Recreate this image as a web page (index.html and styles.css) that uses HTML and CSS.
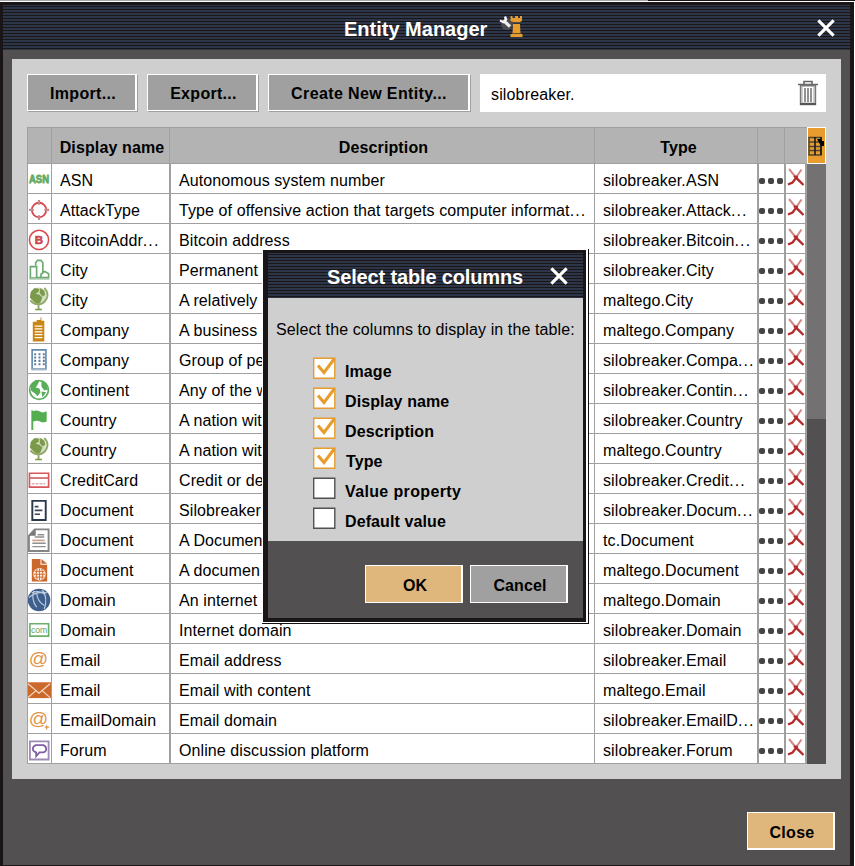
FILE: index.html
```html
<!DOCTYPE html>
<html lang="en">
<head>
<meta charset="utf-8">
<title>Entity Manager</title>
<link rel="stylesheet" href="styles.css">
</head>
<body>
<svg class="defs" aria-hidden="true">
  <symbol id="i-attack" viewBox="0 0 24 28"><g fill="none" stroke="#d9494d"><circle cx="11.500" cy="15.500" r="7.500" stroke-width="1.900"/><path stroke="#c9868a" stroke-width="2.400" d="M11.500 5v5M11.500 21v5M1 15.500h5M17 15.500h5"/></g></symbol>
  <symbol id="i-city" viewBox="0 0 24 28"><g fill="none" stroke="#6aaa70" stroke-width="1.700"><path d="M8 11V8l2-2.500h3.500l2 2.500V18M2.500 12h6.500v12H2.500zM9 23.500h12.500v-4L17.500 17l-4 3v3.500"/><path stroke="#a5c9a9" d="M1.500 24.800h21"/></g></symbol>
  <symbol id="i-globe" viewBox="0 0 24 28"><circle cx="10.500" cy="11" r="8.500" fill="#d4dec5"/><path fill="#7b9a4a" d="M3 7l4-4 5 1-1 3-3 2 4 1 3 3-2 5-3 2-4-3-4-4zM13 3l4 3 1 4-3 2-3-4z"/><path fill="none" stroke="#91aa6a" stroke-width="2" d="M17 3q5 5 2.500 11-3 6-9 6-5 0-8-4M11 20v5"/><path stroke="#7b9a4a" stroke-width="1.600" d="M7.500 25.500h7"/></symbol>
  <symbol id="i-tower" viewBox="0 0 24 28"><path fill="#cb8515" d="M5 7h4V5h4V2.500h1V6h3v21.500H5z"/><path stroke="#fff" stroke-width="1.300" d="M7 11.500h8M7 14.500h8M7 17.500h8M7 20.500h8M7 23.500h8"/></symbol>
  <symbol id="i-office" viewBox="0 0 24 28"><path fill="#fff" stroke="#6389ad" stroke-width="1.700" d="M4.300 5h14.400v20H4.300z"/><path fill="none" stroke="#587c9f" stroke-width="2.200" stroke-dasharray="2 2.500" d="M6.500 9.500h11M6.500 13h11M6.500 16.500h11M6.500 20h11"/><path stroke="#a9b9c8" stroke-width="2" d="M3.500 25.500h16"/></symbol>
  <symbol id="i-world" viewBox="0 0 24 28"><circle cx="11.500" cy="15.500" r="9.800" fill="#fff" stroke="#58ad58" stroke-width="1.700"/><path fill="#58ad58" d="M3 10l5-5 4 1-2 4-2 3 4 1 1 4-3 4-3-3-4-3zM14 6l5 3 2 6-4 1-3-4zM14 17l5 1-4 5z"/></symbol>
  <symbol id="i-flag" viewBox="0 0 24 28"><path fill="#54ae50" d="M3.500 5.500H5v1q4-2 8 .5 3 1.500 6.500-.5v10.500q-4 2-7 0-3-1.500-7 0v9h-2z"/></symbol>
  <symbol id="i-card" viewBox="0 0 24 28"><path fill="#fff" stroke="#d7575b" stroke-width="1.700" d="M1.500 8.500h20v14.500h-20z"/><path stroke="#cf686b" stroke-width="1.800" d="M1.500 13.500h20"/><path stroke="#d9b3b5" stroke-width="1.600" stroke-dasharray="3 1" d="M4 19.500h14"/></symbol>
  <symbol id="i-doc1" viewBox="0 0 24 28"><path fill="#fff" stroke="#2c3948" stroke-width="2" d="M4.500 6h14v20h-14z"/><path stroke="#3d4855" stroke-width="1.800" d="M7 12h4M7 16h8M7 20h5.500"/></symbol>
  <symbol id="i-doc2" viewBox="0 0 24 28"><path fill="#fff" stroke="#858585" stroke-width="2" d="M7 4.500h14.500V27H1V11z"/><path fill="#777" d="M1 11h7V4z"/><path stroke="#8f8f8f" stroke-width="1.500" d="M10 10h7M4.500 19h14M4.500 22.500h14M7 12.500h10"/><path stroke="#cba58d" stroke-width="1.800" d="M4.500 16h13"/></symbol>
  <symbol id="i-doc3" viewBox="0 0 24 28"><path fill="#cb682b" d="M4 4h9v6h7v17.500H4zM14 4l6 5h-6z"/><circle cx="12" cy="20" r="6.500" fill="#fbe6da"/><path fill="none" stroke="#cb682b" stroke-width=".9" d="M6 20h12M7 17h10M7 23h10M12 14v12M9.500 14.500q-2 5 0 11M14.500 14.500q2 5 0 11"/></symbol>
  <symbol id="i-domain" viewBox="0 0 24 28"><circle cx="11.500" cy="15.500" r="11.800" fill="#3f608d"/><path fill="none" stroke="#c0cddd" stroke-width="1.200" d="M1 13q8-7 19-5M6 6q-3 9 3 17M9 8q1 10 8 13M15 5q6 8 2 20M4 8q8-3 14 2"/></symbol>
  <symbol id="i-mail" viewBox="0 0 24 28"><path fill="#cb682b" d="M0 7.500h24v16.500H0z"/><path fill="none" stroke="#f6d9c8" stroke-width="1.300" d="M0 9l11.500 10L23 9M0 23.500l8-7M23 23.500l-8-7"/></symbol>
  <symbol id="i-forum" viewBox="0 0 24 28"><path fill="#fff" stroke="#9d8bb5" stroke-width="1.900" d="M2 6.500h19.500v19H2z"/><path fill="none" stroke="#8060a4" stroke-width="1.800" d="M8 10.500h8q3 1 3 4t-3 3.500h-4L8.500 22v-4q-3.500-1-3.500-3.500t3-4z"/></symbol>
  <symbol id="i-x" viewBox="0 0 18 20"><path fill="none" stroke="#d28888" stroke-width="2" d="M2 1.500L9 10M14.500 2L9 10"/><path fill="none" stroke="#b32a2c" stroke-width="2.200" d="M7 8.500Q9 10 16.500 17.500M10.500 8.500L5.500 15l-4.500 2"/></symbol>
  <symbol id="i-close" viewBox="0 0 20 20"><path fill="none" stroke="#fff" stroke-width="3.400" d="M1.500 1.500l17 17M18.500 1.500l-17 17"/></symbol>
  <symbol id="i-check" viewBox="0 0 23 22"><path fill="#fff" stroke="#e79c2d" stroke-width="1.400" d="M.700 1.200h21.100v20H.7z"/><path fill="none" stroke="#e79c2d" stroke-width="3" d="M5 8.500l6 7L21.500 1.500"/></symbol>
  <symbol id="i-box" viewBox="0 0 23 22"><path fill="#fff" stroke="#525051" stroke-width="1.400" d="M.700 1.200h21.100v20H.7z"/></symbol>
</svg>

<div class="edge"></div>
<main class="window">
  <header class="titlebar">
    <h1 class="title">Entity Manager</h1>
    <svg class="logo" viewBox="0 0 24 24">
      <circle cx="8" cy="9" r="6" fill="#555" opacity=".8"/>
      <path stroke="#eee" stroke-width="3.200" d="M4.500 5.500l6.500 6"/><path fill="none" stroke="#f4f4f4" stroke-width="2.400" d="M1 5.500l3.500 1.500L7 4.500 6 1.500"/>
      <path fill="#e79c2d" d="M11.500 1h2v2h2.500V1h3v2h2V1h2v5l-2 1v1h-7V7l-2.500-1zM14 9h7l.5 10h2v3H11.500v-3h2z"/>
      <path stroke="#604a34" d="M13.500 7.500h8M14 18.500h7"/>
    </svg>
    <svg class="close-x"><use href="#i-close"/></svg>
  </header>
  <section class="panel">
    <div class="toolbar">
      <button class="btn import">Import...</button>
      <button class="btn export">Export...</button>
      <button class="btn create">Create New Entity...</button>
      <div class="search"><span>silobreaker.</span>
        <svg class="trash" viewBox="0 0 20 26"><path fill="none" stroke="#666" stroke-width="1.600" d="M6 4V1.500h8V4M0 4.500h20"/><path fill="#d0d0d0" stroke="#777" stroke-width="1.400" d="M2.500 5.500h15v19h-15z"/><path fill="#fff" d="M5 7h10v15H5z"/><path stroke="#777" stroke-width="1.600" d="M7 8v14M10 8v14M13 8v14"/><path stroke="#555" stroke-width="2" d="M2 24h16"/></svg>
      </div>
    </div>
    <div class="table-wrap">
      <div class="table">
        <div class="row head"><div></div><div>Display name</div><div>Description</div><div>Type</div><div></div><div></div></div>
        <div class="row"><svg viewBox="0 0 24 28"><text class="asn" x="1" y="19" textLength="21" lengthAdjust="spacingAndGlyphs">ASN</text></svg><div>ASN</div><div>Autonomous system number</div><div>silobreaker.ASN</div><div class="dots"><i></i><i></i><i></i></div><svg><use href="#i-x"/></svg></div>
        <div class="row"><svg><use href="#i-attack"/></svg><div>AttackType</div><div>Type of offensive action that targets computer informat<b>...</b></div><div>silobreaker.Attack<b>...</b></div><div class="dots"><i></i><i></i><i></i></div><svg><use href="#i-x"/></svg></div>
        <div class="row"><svg viewBox="0 0 24 28"><circle cx="11.500" cy="15.500" r="10" fill="none" stroke="#d9494d" stroke-width="1.600"/><text class="coin" x="11.500" y="19.500" text-anchor="middle">B</text></svg><div>BitcoinAddr<b>...</b></div><div>Bitcoin address</div><div>silobreaker.Bitcoin<b>...</b></div><div class="dots"><i></i><i></i><i></i></div><svg><use href="#i-x"/></svg></div>
        <div class="row"><svg><use href="#i-city"/></svg><div>City</div><div>Permanent</div><div>silobreaker.City</div><div class="dots"><i></i><i></i><i></i></div><svg><use href="#i-x"/></svg></div>
        <div class="row"><svg><use href="#i-globe"/></svg><div>City</div><div>A relatively</div><div>maltego.City</div><div class="dots"><i></i><i></i><i></i></div><svg><use href="#i-x"/></svg></div>
        <div class="row"><svg><use href="#i-tower"/></svg><div>Company</div><div>A business</div><div>maltego.Company</div><div class="dots"><i></i><i></i><i></i></div><svg><use href="#i-x"/></svg></div>
        <div class="row"><svg><use href="#i-office"/></svg><div>Company</div><div>Group of pe</div><div>silobreaker.Compa<b>...</b></div><div class="dots"><i></i><i></i><i></i></div><svg><use href="#i-x"/></svg></div>
        <div class="row"><svg><use href="#i-world"/></svg><div>Continent</div><div>Any of the w</div><div>silobreaker.Contin<b>...</b></div><div class="dots"><i></i><i></i><i></i></div><svg><use href="#i-x"/></svg></div>
        <div class="row"><svg><use href="#i-flag"/></svg><div>Country</div><div>A nation wit</div><div>silobreaker.Country</div><div class="dots"><i></i><i></i><i></i></div><svg><use href="#i-x"/></svg></div>
        <div class="row"><svg><use href="#i-globe"/></svg><div>Country</div><div>A nation wit</div><div>maltego.Country</div><div class="dots"><i></i><i></i><i></i></div><svg><use href="#i-x"/></svg></div>
        <div class="row"><svg><use href="#i-card"/></svg><div>CreditCard</div><div>Credit or de</div><div>silobreaker.Credit<b>...</b></div><div class="dots"><i></i><i></i><i></i></div><svg><use href="#i-x"/></svg></div>
        <div class="row"><svg><use href="#i-doc1"/></svg><div>Document</div><div>Silobreaker</div><div>silobreaker.Docum<b>...</b></div><div class="dots"><i></i><i></i><i></i></div><svg><use href="#i-x"/></svg></div>
        <div class="row"><svg><use href="#i-doc2"/></svg><div>Document</div><div>A Documen</div><div>tc.Document</div><div class="dots"><i></i><i></i><i></i></div><svg><use href="#i-x"/></svg></div>
        <div class="row"><svg><use href="#i-doc3"/></svg><div>Document</div><div>A documen</div><div>maltego.Document</div><div class="dots"><i></i><i></i><i></i></div><svg><use href="#i-x"/></svg></div>
        <div class="row"><svg><use href="#i-domain"/></svg><div>Domain</div><div>An internet</div><div>maltego.Domain</div><div class="dots"><i></i><i></i><i></i></div><svg><use href="#i-x"/></svg></div>
        <div class="row"><svg viewBox="0 0 24 28"><path fill="#fff" stroke="#6ab06a" stroke-width="1.700" d="M2 9h19.500v13H2z"/><text class="com" x="3" y="18.500" textLength="17" lengthAdjust="spacingAndGlyphs">com</text></svg><div>Domain</div><div>Internet domain</div><div>silobreaker.Domain</div><div class="dots"><i></i><i></i><i></i></div><svg><use href="#i-x"/></svg></div>
        <div class="row"><svg viewBox="0 0 24 28"><text class="at" x="11" y="21" text-anchor="middle">@</text></svg><div>Email</div><div>Email address</div><div>silobreaker.Email</div><div class="dots"><i></i><i></i><i></i></div><svg><use href="#i-x"/></svg></div>
        <div class="row"><svg><use href="#i-mail"/></svg><div>Email</div><div>Email with content</div><div>maltego.Email</div><div class="dots"><i></i><i></i><i></i></div><svg><use href="#i-x"/></svg></div>
        <div class="row"><svg viewBox="0 0 24 28"><text class="at" x="11" y="21" text-anchor="middle">@</text><path stroke="#df9448" stroke-width="1.300" d="M17.500 23h4.500M19.500 21v4.500"/></svg><div>EmailDomain</div><div>Email domain</div><div>silobreaker.EmailD<b>...</b></div><div class="dots"><i></i><i></i><i></i></div><svg><use href="#i-x"/></svg></div>
        <div class="row"><svg><use href="#i-forum"/></svg><div>Forum</div><div>Online discussion platform</div><div>silobreaker.Forum</div><div class="dots"><i></i><i></i><i></i></div><svg><use href="#i-x"/></svg></div>
      </div>
      <div class="side">
        <div class="columns-btn"><svg viewBox="0 0 17 20"><path fill="none" stroke="#4d4636" stroke-width="1.500" d="M1 1.500h12v17.500H1zM1 6h12M1 10.500h12M1 14.500h12"/><path fill="none" stroke="#1c1a18" stroke-width="1.600" d="M7 1v18M13 1v18"/><path fill="#000" d="M9 3h4l1 2h2v5h-3z"/></svg></div>
        <div class="thumb"></div>
      </div>
    </div>
  </section>
  <footer class="footer"><button class="btn gold close">Close</button></footer>
</main>

<div class="shadow">
<section class="dialog" role="dialog">
  <header class="titlebar">
    <h2 class="title">Select table columns</h2>
    <svg class="close-x"><use href="#i-close"/></svg>
  </header>
  <div class="dialog-body">
    <p>Select the columns to display in the table:</p>
    <ul>
      <li><svg><use href="#i-check"/></svg><span>Image</span></li>
      <li><svg><use href="#i-check"/></svg><span>Display name</span></li>
      <li><svg><use href="#i-check"/></svg><span>Description</span></li>
      <li><svg><use href="#i-check"/></svg><span class="nudge">Type</span></li>
      <li><svg><use href="#i-box"/></svg><span class="wide">Value property</span></li>
      <li><svg><use href="#i-box"/></svg><span>Default value</span></li>
    </ul>
  </div>
  <div class="dialog-footer"><button class="btn gold ok">OK</button><button class="btn cancel">Cancel</button></div>
</section>
</div>
</body>
</html>
```
FILE: styles.css
```css
* { box-sizing: border-box; }
html, body { height: 866px; overflow: hidden; }
body { margin: 0; background: #fff; font: 16px/20px "Liberation Sans", Arial, sans-serif; color: #000; }
.defs { position: absolute; width: 0; height: 0; }
.edge { height: 1px; margin-bottom: 1px; background: linear-gradient(90deg, #a8a8a8 648px, #1a1617 648px); }

.window { width: 854px; height: 864px; border: solid #1a1617; border-width: 3px 4px 1px 3px; background: #525051; }
.titlebar {
  display: flex; align-items: center; height: 45px;
  background: repeating-linear-gradient(#2d3548 0 1px, #1a1617 1px 2px, #2d3548 2px 3px);
}
.title { margin: 0; font-size: 20px; line-height: 24px; color: #fff; white-space: nowrap; }
.window > .titlebar .title { margin-left: 341px; padding-top: 2px; }
.logo { width: 24px; height: 24px; margin: -1px 0 0 12px; }
.close-x { width: 18px; height: 18px; }
.window > .titlebar .close-x { margin: 1px 15px 0 auto; }

.panel { width: 829px; height: 720px; margin: 9px 0 0 9px; padding: 15px; background: #cfcfcf; }
.toolbar { display: flex; height: 38px; }
.btn {
  height: 38px; padding: 3px 0 0 3px; font: bold 16px/20px "Liberation Sans", Arial, sans-serif; letter-spacing: .3px;
  color: #000; background: #a0a0a0; border: 1px solid #fff; border-right-width: 2px;
  border-radius: 0; white-space: nowrap;
}
.toolbar .btn { height: 37px; box-shadow: 1px 1px 0 #a0a0a0; }
.import { width: 110px; margin-right: 10px; }
.export { width: 111px; margin-right: 10px; }
.create { width: 202px; margin-right: 10px; }
.toolbar .create { padding-left: 1px; letter-spacing: .38px; }
.search { flex: 1; display: flex; align-items: center; justify-content: space-between; padding: 0 8px 0 11px; background: #fff; }
.search span { padding-top: 3px; letter-spacing: .15px; }
.trash { width: 20px; height: 26px; }

.table-wrap { display: flex; margin-top: 15px; }
.table { width: 780px; }
.row {
  display: grid; grid-template-columns: 24px 118px 425px 163px 27px 21px; height: 30px;
  background: #fff; border-bottom: 1px solid #a0a0a0; border-right: 2px solid #a0a0a0;
  letter-spacing: .09px;
}
.row > * { border-left: 1px solid #a0a0a0; white-space: nowrap; overflow: hidden; height: 29px; }
.row > :nth-child(3), .row > :nth-child(5), .row > :nth-child(6) { border-left-width: 2px; }
.row > div { padding: 7px 0 0 8px; line-height: 20px; }
.row b { font-weight: normal; letter-spacing: 1.1px; }
.row > svg { width: 100%; display: block; }
.row > svg:first-child { width: 24px; padding-right: 0; }
.row > svg:last-child { padding: 3px 0 5px 1px; }
.row > .dots { display: flex; gap: 3px; padding: 14px 0 0; }
.dots i { width: 6px; height: 6px; border-radius: 2px; background: #444; }
.asn { font: bold 11px "Liberation Sans", sans-serif; fill: #62ab62; stroke: #62ab62; stroke-width: .8px; letter-spacing: 0; }
.coin { font: bold 12px "Liberation Sans", sans-serif; fill: #c9484d; stroke: #c9484d; stroke-width: .6px; letter-spacing: 0; }
.com { font: 10px "Liberation Sans", sans-serif; fill: #64a064; letter-spacing: 0; }
.at { font: 20px "Liberation Sans", sans-serif; fill: #df9448; letter-spacing: 0; }
.row.head { height: 37px; background: #b3b3b3; border-top: 1px solid #a0a0a0; font-weight: bold; border-right: 0; letter-spacing: .12px; }
.row.head > div { height: 35px; padding: 10px 0 0 3px; text-align: center; border-left-width: 1px; }
.row.head > :nth-child(4) { padding-left: 5px; }
.side { width: 19px; height: 637px; background: #525051; }
.columns-btn { display: flex; align-items: center; height: 37px; background: #e79c2d; border: 1px solid #fff; }
.columns-btn svg { width: 17px; height: 20px; }
.thumb { height: 255px; background: #737172; }

.footer { display: flex; justify-content: flex-end; padding: 33px 15px 0 0; }
.gold { background: #dfb77d; }
.close { width: 88px; border-bottom-width: 2px; padding-top: 4px; }

.shadow {
  position: absolute; left: 262px; top: 249px; width: 327px; height: 375px;
  padding: 1px 2px 1px 1px; background: #fff; border: solid #111; border-width: 0 1px 1px 0;
}
.dialog { height: 372px; border: solid #1a1617; border-width: 3px 3px 4px 5px; background: #cfcfcf; }
.dialog .title { margin-left: 59px; padding-top: 3px; letter-spacing: -.15px; }
.dialog .close-x { margin: 1px 15px 0 auto; }
.dialog-body { height: 243px; padding: 22px 0 0 8px; }
.dialog-body p { margin: 0; white-space: nowrap; letter-spacing: .1px; }
ul { list-style: none; margin: 17px 0 0 37px; padding: 0; }
li { display: flex; height: 30px; font-weight: bold; letter-spacing: .1px; }
li svg { width: 23px; height: 22px; }
li span { margin: 5px 0 0 9px; }
li .nudge { margin-left: 10px; }
li .wide { letter-spacing: .36px; }
.dialog-footer { display: flex; gap: 7px; height: 77px; padding: 24px 0 0 97px; background: #525051; }
.dialog-footer .btn { width: 98px; letter-spacing: .1px; }
```
